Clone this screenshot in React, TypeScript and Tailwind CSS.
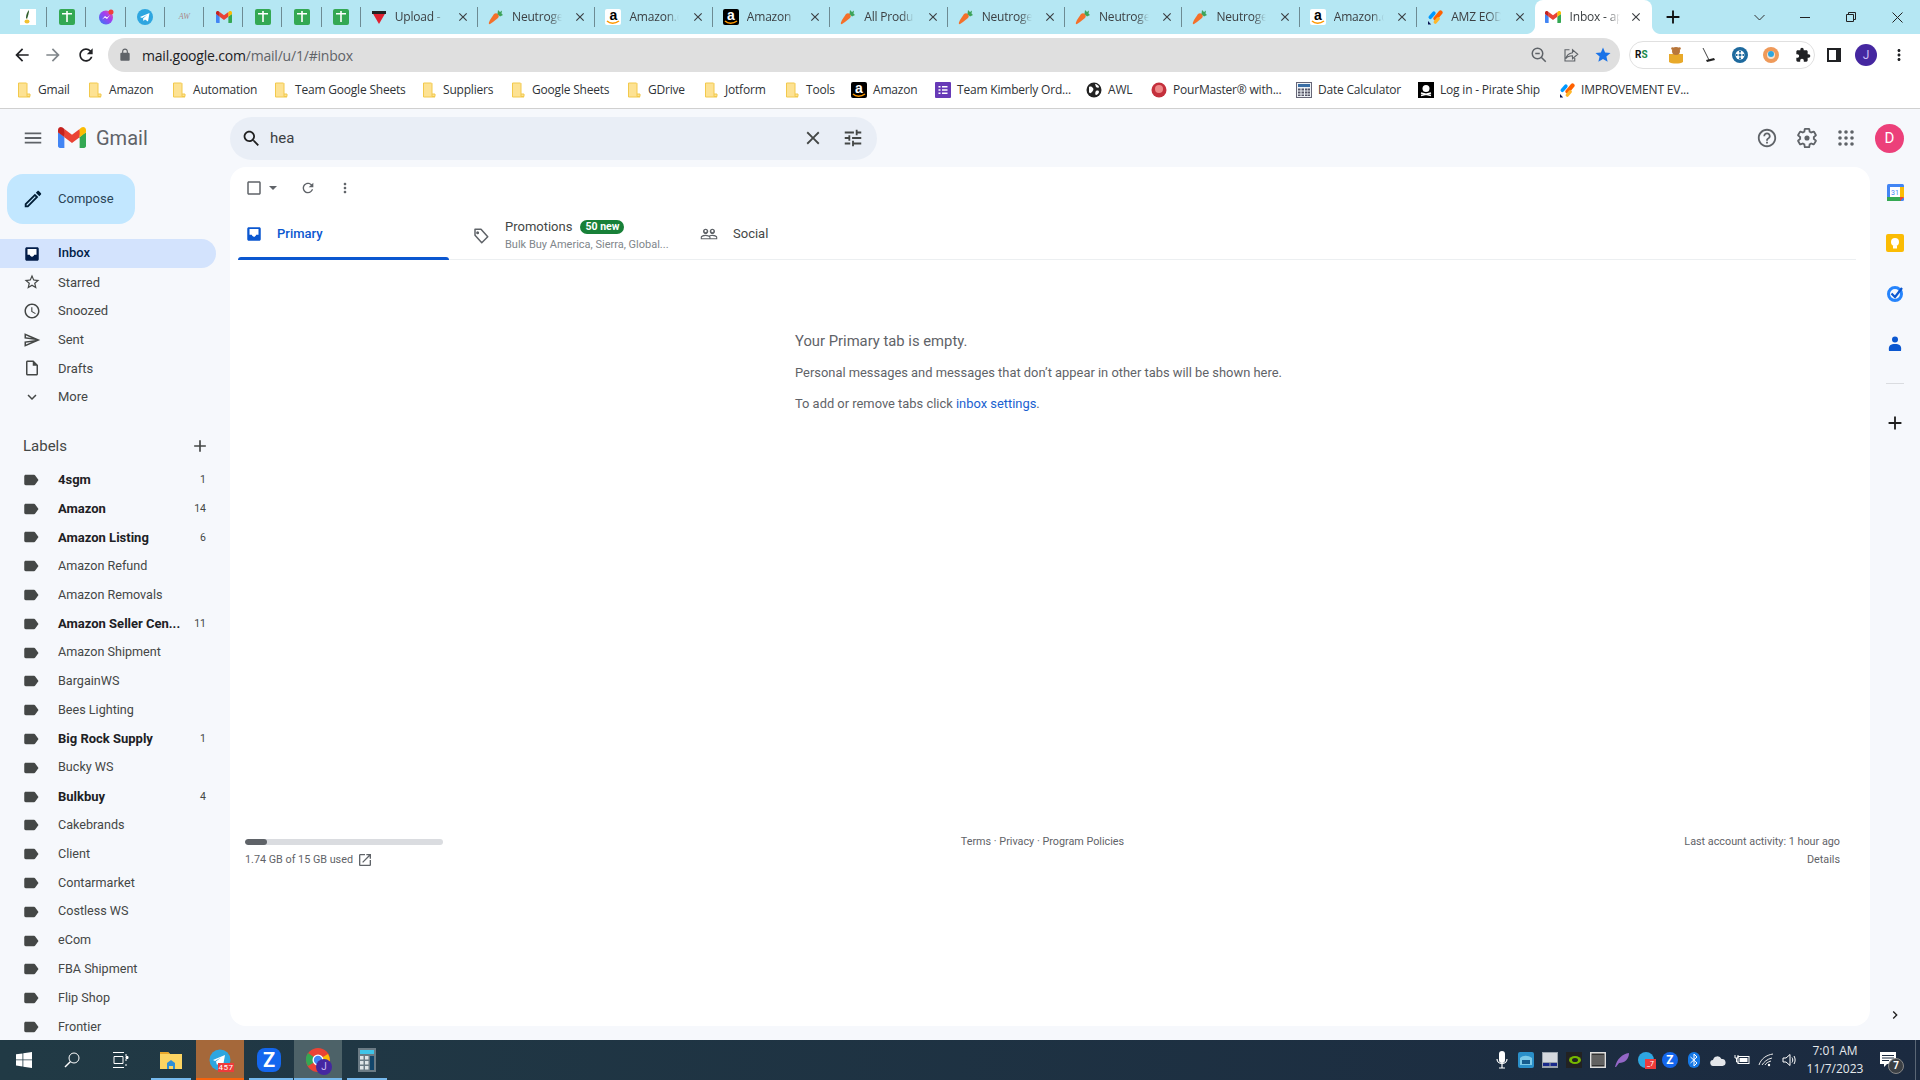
import React from "react";

const P = ({ d, s = 24, c = "#444746", className = "" }: { d: string; s?: number; c?: string; className?: string }) => (
  <svg width={s} height={s} viewBox="0 0 24 24" fill={c} className={"shrink-0 " + className}><path d={d} /></svg>
);

const I = {
  menu: "M3 18h18v-2H3v2zm0-5h18v-2H3v2zm0-7v2h18V6H3z",
  search: "M15.5 14h-.79l-.28-.27C15.41 12.59 16 11.11 16 9.5 16 5.91 13.09 3 9.5 3S3 5.91 3 9.5 5.91 16 9.5 16c1.61 0 3.09-.59 4.23-1.57l.27.28v.79l5 4.99L20.49 19l-4.99-5zm-6 0C7.01 14 5 11.99 5 9.5S7.01 5 9.5 5 14 7.01 14 9.5 11.99 14 9.5 14z",
  close: "M19 6.41L17.59 5 12 10.59 6.41 5 5 6.41 10.59 12 5 17.59 6.41 19 12 13.41 17.59 19 19 17.59 13.41 12z",
  tune: "M3 17v2h6v-2H3zM3 5v2h10V5H3zm10 16v-2h8v-2h-8v-2h-2v6h2zM7 9v2H3v2h4v2h2V9H7zm14 4v-2H11v2h10zm-6-4h2V7h4V5h-4V3h-2v6z",
  refresh: "M17.65 6.35C16.2 4.9 14.21 4 12 4c-4.42 0-7.99 3.58-7.99 8s3.57 8 7.99 8c3.73 0 6.84-2.55 7.73-6h-2.08c-.82 2.33-3.04 4-5.65 4-3.31 0-6-2.69-6-6s2.69-6 6-6c1.66 0 3.14.69 4.22 1.78L13 11h7V4l-2.35 2.35z",
  vert: "M12 8c1.1 0 2-.9 2-2s-.9-2-2-2-2 .9-2 2 .9 2 2 2zm0 2c-1.1 0-2 .9-2 2s.9 2 2 2 2-.9 2-2-.9-2-2-2zm0 6c-1.1 0-2 .9-2 2s.9 2 2 2 2-.9 2-2-.9-2-2-2z",
  star: "M22 9.24l-7.19-.62L12 2 9.19 8.63 2 9.24l5.46 4.73L5.82 21 12 17.27 18.18 21l-1.63-7.03L22 9.24zM12 15.4l-3.76 2.27 1-4.28-3.32-2.88 4.38-.38L12 6.1l1.71 4.04 4.38.38-3.32 2.88 1 4.28L12 15.4z",
  clock: "M11.99 2C6.47 2 2 6.48 2 12s4.47 10 9.99 10C17.52 22 22 17.52 22 12S17.52 2 11.99 2zM12 20c-4.42 0-8-3.58-8-8s3.58-8 8-8 8 3.58 8 8-3.58 8-8 8zm.5-13H11v6l5.25 3.15.75-1.23-4.5-2.67z",
  send: "M4.01 6.03l7.51 3.22-7.52-1 .01-2.22m7.5 8.72L4 17.97v-2.22l7.51-1M2.01 3L2 10l15 2-15 2 .01 7L23 12 2.01 3z",
  file: "M14 2H6c-1.1 0-1.99.9-1.99 2L4 20c0 1.1.89 2 1.99 2H18c1.1 0 2-.9 2-2V8l-6-6zm4 18H6V4h7v5h5v11z",
  label: "M17.63 5.84C17.27 5.33 16.67 5 16 5L5 5.01C3.9 5.01 3 5.9 3 7v10c0 1.1.9 1.99 2 1.99L16 19c.67 0 1.27-.33 1.63-.84L22 12l-4.37-6.16z",
  people: "M16.5 13c-1.2 0-3.07.34-4.5 1-1.43-.67-3.3-1-4.5-1C5.33 13 1 14.08 1 16.25V19h22v-2.75c0-2.17-4.33-3.25-6.5-3.25zm-4 4.5h-10v-1.25c0-.54 2.56-1.75 5-1.75s5 1.21 5 1.75v1.25zm9 0H14v-1.25c0-.46-.2-.86-.52-1.22.88-.3 1.96-.53 3.02-.53 2.44 0 5 1.21 5 1.75v1.25zM7.5 12c1.93 0 3.5-1.57 3.5-3.5S9.43 5 7.5 5 4 6.57 4 8.5 5.57 12 7.5 12zm0-5.5c.83 0 1.5.67 1.5 1.5s-.67 1.5-1.5 1.5S6 8.83 6 8s.67-1.5 1.5-1.5zm9 5.5c1.93 0 3.5-1.57 3.5-3.5S18.43 5 16.5 5 13 6.57 13 8.5s1.57 3.5 3.5 3.5zm0-5.5c.83 0 1.5.67 1.5 1.5s-.67 1.5-1.5 1.5S15 8.83 15 8s.67-1.5 1.5-1.5z",
  help: "M11 18h2v-2h-2v2zm1-16C6.48 2 2 6.48 2 12s4.48 10 10 10 10-4.48 10-10S17.52 2 12 2zm0 18c-4.41 0-8-3.59-8-8s3.59-8 8-8 8 3.59 8 8-3.59 8-8 8zm0-14c-2.21 0-4 1.79-4 4h2c0-1.1.9-2 2-2s2 .9 2 2c0 2-3 1.75-3 5h2c0-2.25 3-2.5 3-5 0-2.21-1.79-4-4-4z",
  gear: "M19.43 12.98c.04-.32.07-.64.07-.98 0-.34-.03-.66-.07-.98l2.11-1.65c.19-.15.24-.42.12-.64l-2-3.46c-.09-.16-.26-.25-.44-.25-.06 0-.12.01-.17.03l-2.49 1c-.52-.4-1.08-.73-1.69-.98l-.38-2.65C14.46 2.18 14.25 2 14 2h-4c-.25 0-.46.18-.49.42l-.38 2.65c-.61.25-1.17.59-1.69.98l-2.49-1c-.06-.02-.12-.03-.18-.03-.17 0-.34.09-.43.25l-2 3.46c-.13.22-.07.49.12.64l2.11 1.65c-.04.32-.07.65-.07.98 0 .33.03.66.07.98l-2.11 1.65c-.19.15-.24.42-.12.64l2 3.46c.09.16.26.25.44.25.06 0 .12-.01.17-.03l2.49-1c.52.4 1.08.73 1.69.98l.38 2.65c.03.24.24.42.49.42h4c.25 0 .46-.18.49-.42l.38-2.65c.61-.25 1.17-.59 1.69-.98l2.49 1c.06.02.12.03.18.03.17 0 .34-.09.43-.25l2-3.46c.12-.22.07-.49-.12-.64l-2.11-1.65z",
  edit: "M3 17.25V21h3.75L17.81 9.94l-3.75-3.75L3 17.25zM5.92 19H5v-.92l9.06-9.06.92.92L5.92 19zM20.71 5.63l-2.34-2.34c-.2-.2-.45-.29-.71-.29s-.51.1-.7.29l-1.83 1.83 3.75 3.75 1.83-1.83c.39-.39.39-1.02 0-1.41z",
  open: "M19 19H5V5h7V3H5c-1.11 0-2 .9-2 2v14c0 1.1.89 2 2 2h14c1.1 0 2-.9 2-2v-7h-2v7zM14 3v2h3.59l-9.83 9.83 1.41 1.41L19 6.41V10h2V3h-7z",
  more: "M16.59 8.59L12 13.17 7.41 8.59 6 10l6 6 6-6z",
  right: "M8.59 16.59L13.17 12 8.59 7.41 10 6l6 6-6 6z",
  plus: "M19 13h-6v6h-2v-6H5v-2h6V5h2v6h6v2z",
  back: "M20 11H7.83l5.59-5.59L12 4l-8 8 8 8 1.41-1.41L7.83 13H20v-2z",
  fwd: "M4 11h12.17l-5.59-5.59L12 4l8 8-8 8-1.41-1.41L16.17 13H4v-2z",
  lock: "M18 8h-1V6c0-2.76-2.24-5-5-5S7 3.24 7 6v2H6c-1.1 0-2 .9-2 2v10c0 1.1.9 2 2 2h12c1.1 0 2-.9 2-2V10c0-1.1-.9-2-2-2zM9 6c0-1.66 1.34-3 3-3s3 1.34 3 3v2H9V6z",
  starFill: "M12 17.27L18.18 21l-1.64-7.03L22 9.24l-7.19-.61L12 2 9.19 8.63 2 9.24l5.46 4.73L5.82 21z",
  puzzle: "M20.5 11H19V7c0-1.1-.9-2-2-2h-4V3.5a2.5 2.5 0 0 0-5 0V5H4c-1.1 0-1.99.9-1.99 2v3.8H3.5c1.49 0 2.7 1.21 2.7 2.7s-1.21 2.7-2.7 2.7H2V20c0 1.1.9 2 2 2h3.8v-1.5c0-1.49 1.21-2.7 2.7-2.7s2.7 1.21 2.7 2.7V22H17c1.1 0 2-.9 2-2v-4h1.5a2.5 2.5 0 0 0 0-5z",
};

const GmailM = ({ w = 16 }: { w?: number }) => (
  <svg width={w} viewBox="0 0 256 193" className="shrink-0">
    <path fill="#4285F4" d="M58.182 192.05V93.14L27.507 65.077 0 49.504v125.091c0 9.658 7.825 17.455 17.455 17.455h40.727z" />
    <path fill="#34A853" d="M197.818 192.05h40.727c9.658 0 17.455-7.826 17.455-17.455V49.505l-31.156 17.837-27.026 25.798v98.91z" />
    <path fill="#EA4335" d="m58.182 93.14-4.174-38.647 4.174-36.989L128 69.868l69.818-52.364 4.669 34.992-4.669 40.644L128 145.504z" />
    <path fill="#FBBC04" d="M197.818 17.504V93.14L256 49.504V26.231c0-21.585-24.64-33.89-41.89-20.945l-16.292 12.218z" />
    <path fill="#C5221F" d="M0 49.504l26.759 20.07L58.182 93.14V17.504L41.89 5.286C24.61-7.66 0 4.646 0 26.23v23.273z" />
  </svg>
);

const Sheets = () => (
  <svg width="16" height="16" viewBox="0 0 16 16"><rect width="16" height="16" rx="2" fill="#34a853" /><path d="M3 4h10v1.500H8.800V13H7.200V5.500H3zM7.200 2h1.600v2H7.200z" fill="#fff" /></svg>
);
const Carrot = () => (
  <svg width="16" height="16" viewBox="0 0 16 16"><path d="M1 15c-.5-.5 0-2 1-4l4-6c1-1 3-1 4 0s1 3 0 4l-5 4c-2 1.500-3.500 2.500-4 2z" fill="#f4702a" /><path d="M9.500 5 10 1l2 2 2-1.500-.5 3L15 6l-3 1.500z" fill="#3da35a" /></svg>
);
const AmazonIcon = ({ dark = false }: { dark?: boolean }) => (
  <span className={"relative w-4 h-4 shrink-0 flex justify-center leading-[12px] text-[14px] font-bold rounded-[2px] overflow-hidden font-['Liberation_Sans',sans-serif] " + (dark ? "bg-black text-white" : "bg-white text-black")}>
    a
    <svg width="14" height="5" viewBox="0 0 14 5" className="absolute left-[1px] bottom-0"><path d="M1 1c3 3 8 3 12 0" stroke="#f90" strokeWidth="1.500" fill="none" /></svg>
  </span>
);
const Jot = () => (
  <svg width="16" height="16" viewBox="0 0 16 16">
    <path d="M7 8l5-6a2 2 0 0 1 3 3l-5 6a2 2 0 0 1-3-3z" fill="#ff6100" />
    <path d="M2 7l3.500-4a1.800 1.800 0 0 1 2.700 2.400L4.600 9.500A1.800 1.800 0 0 1 2 7z" fill="#0099ff" />
    <path d="M7 12l3-3.500a1.700 1.700 0 0 1 2.500 2.300l-3 3.500A1.700 1.700 0 0 1 7 12z" fill="#ffb629" />
    <path d="M1 12v3.500h3.200z" fill="#0a1551" />
  </svg>
);
const Folder = () => (
  <svg width="16" height="16" viewBox="0 0 16 16" className="shrink-0"><path d="M2.500 1h8l.5.5V12l3 3H2.500z" fill="#fde293" stroke="#f2c94c" strokeWidth="1" /><path d="M11 12h3v2.500h-3z" fill="#fde293" stroke="#f2c94c" /></svg>
);

const pinned: React.ReactNode[] = [
  <svg key="0" width="16" height="16" viewBox="0 0 16 16"><rect width="16" height="16" fill="#fff" /><path d="M9 1c-2 2-3 5-3 8l1 1c1-3 2-6 2-9z" fill="#2f5d2a" /><ellipse cx="7" cy="12.500" rx="2.500" ry="2" fill="#f2c230" /></svg>,
  <Sheets key="1" />,
  <svg key="2" width="16" height="16" viewBox="0 0 16 16"><defs><linearGradient id="ms" x1="0" y1="1" x2="1" y2="0"><stop offset="0" stopColor="#2f7cf6" /><stop offset=".6" stopColor="#a33df0" /><stop offset="1" stopColor="#ff5c87" /></linearGradient></defs><circle cx="8" cy="8.500" r="7" fill="url(#ms)" /><path d="M4 10.500 7 7l2 1.500L12 6l-3 4-2-1.500z" fill="#fff" /><circle cx="13" cy="3" r="2.500" fill="#f0413a" /></svg>,
  <svg key="3" width="16" height="16" viewBox="0 0 16 16"><circle cx="8" cy="8" r="8" fill="#2ea6e0" /><path d="M3 8l9.500-4-1.500 8.500-3-2-1.500 1.500-.5-2.500 4-3.500-5 3z" fill="#fff" /></svg>,
  <span key="4" className="w-4 h-4 text-[8px] italic text-[#a88] leading-4 text-center font-['Liberation_Serif',serif]">AW</span>,
  <GmailM key="5" />,
  <Sheets key="6" />,
  <Sheets key="7" />,
  <Sheets key="8" />,
];

const tabs: { t: string; i: React.ReactNode }[] = [
  { t: "Upload -", i: <svg width="16" height="16" viewBox="0 0 16 16"><path d="M1 3h14L8 15z" fill="#e02030" /><path d="M1 2h14v3H1z" fill="#222" /></svg> },
  { t: "Neutrogena", i: <Carrot /> },
  { t: "Amazon.com", i: <AmazonIcon /> },
  { t: "Amazon", i: <AmazonIcon dark /> },
  { t: "All Products", i: <Carrot /> },
  { t: "Neutrogena", i: <Carrot /> },
  { t: "Neutrogena", i: <Carrot /> },
  { t: "Neutrogena", i: <Carrot /> },
  { t: "Amazon.com", i: <AmazonIcon /> },
  { t: "AMZ EOD", i: <Jot /> },
];

const bookmarks: { t: string; w: string; i: React.ReactNode }[] = [
  { t: "Gmail", w: "w-[71px]", i: <Folder /> },
  { t: "Amazon", w: "w-[84px]", i: <Folder /> },
  { t: "Automation", w: "w-[102px]", i: <Folder /> },
  { t: "Team Google Sheets", w: "w-[148px]", i: <Folder /> },
  { t: "Suppliers", w: "w-[89px]", i: <Folder /> },
  { t: "Google Sheets", w: "w-[116px]", i: <Folder /> },
  { t: "GDrive", w: "w-[77px]", i: <Folder /> },
  { t: "Jotform", w: "w-[81px]", i: <Folder /> },
  { t: "Tools", w: "w-[67px]", i: <Folder /> },
  { t: "Amazon", w: "w-[84px]", i: <AmazonIcon dark /> },
  { t: "Team Kimberly Ord...", w: "w-[151px]", i: <svg width="16" height="16" viewBox="0 0 16 16"><rect width="16" height="16" rx="1" fill="#673ab7" /><path d="M3.500 4h2v1.500h-2zM7 4h5.500v1.500H7zM3.500 7.200h2v1.500h-2zM7 7.200h5.500v1.500H7zM3.500 10.500h2V12h-2zM7 10.500h5.500V12H7z" fill="#fff" /></svg> },
  { t: "AWL", w: "w-[65px]", i: <svg width="16" height="16" viewBox="0 0 16 16"><circle cx="8" cy="8" r="7.500" fill="#222" /><path d="M3 5c2-1 3 0 4 1s0 3-1 4-2 2-3 0zM9 2c2 0 4 2 4 3s-2 1-3 0zM10 9c2-1 3 0 3 1s-2 3-3 3-1-3 0-4z" fill="#fff" /></svg> },
  { t: "PourMaster® with...", w: "w-[145px]", i: <svg width="16" height="16" viewBox="0 0 16 16"><circle cx="8" cy="8" r="7.500" fill="#c4303c" /><circle cx="8" cy="7" r="4" fill="#e88" /></svg> },
  { t: "Date Calculator", w: "w-[122px]", i: <svg width="16" height="16" viewBox="0 0 16 16"><rect x=".5" y=".5" width="15" height="15" fill="#eef2f6" stroke="#667" /><rect x="2" y="2" width="12" height="3" fill="#3a6ea5" /><path d="M2 6.500h2.500v2H2zM5.500 6.500H8v2H5.500zM9 6.500h2.500v2H9zM12 6.500h2v2h-2zM2 9.500h2.500v2H2zM5.500 9.500H8v2H5.500zM9 9.500h2.500v2H9zM12 9.500h2v2h-2zM2 12.500h2.500v1.500H2zM5.500 12.500H8v1.500H5.500zM9 12.500h2.500v1.500H9zM12 12.500h2v1.500h-2z" fill="#556" /></svg> },
  { t: "Log in - Pirate Ship", w: "w-[141px]", i: <svg width="16" height="16" viewBox="0 0 16 16"><rect width="16" height="16" fill="#000" /><circle cx="8" cy="6.500" r="3.500" fill="#fff" /><path d="M3 11l10 2.500M13 11 3 13.500" stroke="#fff" strokeWidth="1.500" /></svg> },
  { t: "IMPROVEMENT EV...", w: "w-[170px]", i: <Jot /> },
];

const nav: { t: string; d: string }[] = [
  { t: "Starred", d: I.star },
  { t: "Snoozed", d: I.clock },
  { t: "Sent", d: I.send },
  { t: "Drafts", d: I.file },
  { t: "More", d: I.more },
];

const labels: { t: string; n?: string; b?: boolean }[] = [
  { t: "4sgm", n: "1", b: true },
  { t: "Amazon", n: "14", b: true },
  { t: "Amazon Listing", n: "6", b: true },
  { t: "Amazon Refund" },
  { t: "Amazon Removals" },
  { t: "Amazon Seller Cen...", n: "11", b: true },
  { t: "Amazon Shipment" },
  { t: "BargainWS" },
  { t: "Bees Lighting" },
  { t: "Big Rock Supply", n: "1", b: true },
  { t: "Bucky WS" },
  { t: "Bulkbuy", n: "4", b: true },
  { t: "Cakebrands" },
  { t: "Client" },
  { t: "Contarmarket" },
  { t: "Costless WS" },
  { t: "eCom" },
  { t: "FBA Shipment" },
  { t: "Flip Shop" },
  { t: "Frontier" },
];

const InboxIcon = ({ c, s = 18 }: { c: string; s?: number }) => (
  <svg width={s} height={s} viewBox="0 0 24 24" className="shrink-0">
    <path d="M19 3H5c-1.100 0-2 .9-2 2v14c0 1.100.9 2 2 2h14c1.100 0 2-.9 2-2V5c0-1.100-.9-2-2-2z" fill={c} />
    <path d="M6 13h3c.4 1.500 1.500 2.500 3 2.500s2.600-1 3-2.500h3V5.300H6z" fill="#fff" />
  </svg>
);

function Tray() {
  const items: React.ReactNode[] = [
    <svg width="16" height="20" viewBox="0 0 16 20"><rect x="5" y="1" width="6" height="12" rx="3" fill="#fff" /><path d="M3 9c0 6 10 6 10 0M8 14v4M5 18h6" stroke="#fff" strokeWidth="1.200" fill="none" /></svg>,
    <svg width="16" height="16" viewBox="0 0 16 16"><rect width="16" height="16" rx="2" fill="#2a8fc9" /><path d="M2 6c3-3 8-3 12 0v7H2z" fill="#7cc9e8" /><path d="M4 8h8v4H4z" fill="#165c8e" /></svg>,
    <svg width="16" height="16" viewBox="0 0 16 16"><rect width="16" height="16" fill="#9aa3ad" /><rect x="1" y="1" width="14" height="9" fill="#d5d9de" /><path d="M1 11h6.500v3H1zM8.500 11H15v3H8.500z" fill="#1a2a8c" /></svg>,
    <svg width="16" height="16" viewBox="0 0 16 16"><rect width="16" height="16" fill="#222" /><ellipse cx="9" cy="8" rx="6" ry="4" fill="#76b900" /><ellipse cx="9" cy="8" rx="3" ry="2" fill="#222" /></svg>,
    <svg width="16" height="16" viewBox="0 0 16 16"><rect width="16" height="16" fill="#ddd" /><rect x="1.500" y="1.500" width="13" height="13" fill="#333" /><path d="M2 4h12M2 6h12M2 8h12M2 10h12M2 12h12" stroke="#aaa" strokeWidth=".8" /></svg>,
    <svg width="16" height="16" viewBox="0 0 16 16"><path d="M1 15C3 7 8 2 15 1c0 6-4 10-10 10l-3 4z" fill="#9467c7" /></svg>,
    <span className="relative w-4 h-4"><svg width="16" height="16" viewBox="0 0 16 16"><circle cx="8" cy="8" r="8" fill="#2ea6e0" /></svg><span className="absolute right-[-2px] bottom-[-1px] w-[11px] h-[10px] bg-[#ee3b3b] text-white text-[7px] leading-[10px] text-center font-['Roboto',sans-serif]">_7</span></span>,
    <span className="w-4 h-4 rounded-full bg-[#1467ee] text-white text-[12px] leading-4 font-bold text-center font-['Roboto',sans-serif]">Z</span>,
    <svg width="12" height="16" viewBox="0 0 12 16"><rect width="12" height="16" rx="6" fill="#1478e6" /><path d="M2.500 5l6.500 6-3 3V2l3 3-6.500 6" stroke="#fff" fill="none" strokeWidth="1" /></svg>,
    <svg width="16" height="11" viewBox="0 0 16 11"><path d="M3.500 11a3 3 0 0 1-.5-6 4.500 4.500 0 0 1 8.500-1 3.500 3.500 0 0 1 1 7z" fill="#e4e6ea" /></svg>,
    <svg width="16" height="12" viewBox="0 0 16 12"><rect x="4" y="2.500" width="11" height="7" fill="none" stroke="#fff" /><rect x="5.500" y="4" width="8" height="4" fill="#fff" /><path d="M1 1v3h3V1M2.500 4v4h2" stroke="#fff" fill="none" /></svg>,
    <svg width="16" height="14" viewBox="0 0 16 14"><path d="M1 12C3 6 8 2 15 1M4 12c2-3 5-6 10-7M7 12c1-2 3-3 6-4" stroke="#e8e8e8" fill="none" /><circle cx="11" cy="12" r="1.200" fill="#fff" /></svg>,
    <svg width="16" height="14" viewBox="0 0 16 14"><path d="M1 5h3l4-3.500v11L4 9H1z" fill="none" stroke="#fff" /><path d="M10 4.500c1 1.500 1 3.500 0 5M12 3c1.500 2.500 1.500 5.500 0 8" stroke="#fff" fill="none" /></svg>,
  ];
  return (
    <div className="flex items-center ml-auto h-full">
      {items.map((x, i) => (
        <div key={i} className="w-6 flex items-center justify-center">{x}</div>
      ))}
      <div className="w-[66px] text-center text-[12px] leading-[18px] text-[#e6e9ec] font-['Open_Sans',sans-serif]">
        <div>7:01 AM</div>
        <div>11/7/2023</div>
      </div>
      <div className="relative w-10 flex justify-center">
        <svg width="18" height="18" viewBox="0 0 18 18"><path d="M1 1h16v12H8l-3 3v-3H1z" fill="#fff" /><path d="M3 4.500h12M3 7h12M3 9.500h7" stroke="#1b2a40" /></svg>
        <span className="absolute left-[20px] top-[7px] w-4 h-4 rounded-full bg-[#3b3f44] border border-[#888] text-white text-[10px] leading-[14px] text-center font-bold font-['Roboto',sans-serif]">7</span>
      </div>
      <div className="w-[7px]" />
      <div className="w-px h-full bg-[#5a6675]" />
      <div className="w-1" />
    </div>
  );
}

export default function App() {
  return (
    <div className="h-screen w-full overflow-hidden flex flex-col bg-white font-['Roboto',sans-serif]">
      {/* Tab strip */}
      <div className="h-[34px] shrink-0 bg-[#b5e7f3] flex pl-2 font-['Open_Sans',sans-serif]">
        {pinned.map((p, i) => (
          <div key={i} className="relative w-[39.2px] flex items-center justify-center">
            {p}
            <span className="absolute right-0 top-[7px] h-[20px] w-px bg-[#6d8b93]" />
          </div>
        ))}
        {tabs.map((t, i) => (
          <div key={i} className="relative w-[117.400px] flex items-center pl-[10px] pr-[8px] gap-[8px]">
            <span className="w-4 h-4 shrink-0 flex items-center justify-center">{t.i}</span>
            <span className="w-[50px] overflow-hidden whitespace-nowrap text-[12px] tracking-[-0.2px] text-[#3c4043] [mask-image:linear-gradient(to_right,black_75%,transparent)]">{t.t}</span>
            <P d={I.close} s={14} c="#3c4043" className="ml-auto" />
            {i < 9 && <span className="absolute right-0 top-[7px] h-[20px] w-px bg-[#6d8b93]" />}
          </div>
        ))}
        <div className="relative w-[117px] bg-white rounded-t-lg flex items-center pl-[10px] pr-[9px] gap-[9px]">
          <svg width="8" height="8" viewBox="0 0 8 8" className="absolute left-[-8px] bottom-0"><path d="M8 0v8H0c4 0 8-4 8-8z" fill="#fff" /></svg>
          <svg width="8" height="8" viewBox="0 0 8 8" className="absolute right-[-8px] bottom-0"><path d="M0 0v8H8c-4 0-8-4-8-8z" fill="#fff" /></svg>
          <GmailM />
          <span className="w-[50px] overflow-hidden whitespace-nowrap text-[12px] tracking-[-0.2px] text-[#3c4043] [mask-image:linear-gradient(to_right,black_75%,transparent)]">Inbox - ap</span>
          <P d={I.close} s={14} c="#3c4043" className="ml-auto" />
        </div>
        <div className="w-11 flex items-center justify-center -ml-[1px]"><P d={I.plus} s={22} c="#111" /></div>
        <div className="ml-auto flex">
          <div className="w-[46px] flex items-center justify-center"><svg width="11" height="7" viewBox="0 0 11 7"><path d="M.5 1l5 5 5-5" stroke="#333" fill="none" /></svg></div>
          <div className="w-[46px] flex items-center justify-center"><span className="w-[10px] h-px bg-[#222]" /></div>
          <div className="w-[46px] flex items-center justify-center"><svg width="10" height="10" viewBox="0 0 10 10"><path d="M.5 2.500h7v7h-7zM2.500 2.500v-2h7v7h-2" fill="none" stroke="#222" /></svg></div>
          <div className="w-[46px] flex items-center justify-center"><svg width="11" height="11" viewBox="0 0 11 11"><path d="M.5.500l10 10M10.500.500l-10 10" stroke="#222" /></svg></div>
        </div>
      </div>

      {/* Omnibox row */}
      <div className="h-[42px] shrink-0 flex items-center">
        <div className="w-[108px] shrink-0 flex items-center">
          <P d={I.back} s={20} c="#202124" className="ml-3" />
          <P d={I.fwd} s={20} c="#80868b" className="ml-[11px]" />
          <P d={I.refresh} s={20} c="#202124" className="ml-[13px]" />
        </div>
        <div className="w-[1512px] h-[34px] shrink-0 rounded-full bg-[#dfdfdf] flex items-center pl-[10px] pr-2">
          <P d={I.lock} s={14} c="#5f6368" />
          <span className="ml-[10px] text-[14px] text-[#202124] font-['Open_Sans',sans-serif] tracking-[-0.2px]">mail.google.com<span className="text-[#5f6368]">/mail/u/1/#inbox</span></span>
          <div className="ml-auto flex items-center gap-[14px]">
            <svg width="18" height="18" viewBox="0 0 24 24" fill="none" stroke="#5f6368" strokeWidth="2"><circle cx="10" cy="10" r="7" /><path d="M15 15l6 6M7 10h6" /></svg>
            <svg width="18" height="18" viewBox="0 0 24 24" fill="none" stroke="#5f6368" strokeWidth="1.500"><path d="M14 5v4C8 10 6 13 5 17c2-3 5-4 9-4v4l7-6zM10 5H4v15h13v-4" /></svg>
            <P d={I.starFill} s={18} c="#1a73e8" />
          </div>
        </div>
        <div className="ml-[9px] w-[186px] h-[28px] border border-[#e0e0e0] rounded-full flex items-center justify-between pl-[5px] pr-[3px]">
          <span className="w-4 h-4 text-[10px] font-bold leading-4 text-[#111]">R<span className="text-[#1a8a4a]">S</span></span>
          <svg width="18" height="18" viewBox="0 0 18 18"><path d="M2 8h14v8c-3 2-11 2-14 0z" fill="#e8a92a" /><circle cx="9" cy="5" r="4" fill="#b8763a" /><circle cx="5.500" cy="2.500" r="1.300" fill="#b8763a" /><circle cx="12.500" cy="2.500" r="1.300" fill="#b8763a" /></svg>
          <svg width="16" height="16" viewBox="0 0 16 16"><path d="M3 1l6 12" stroke="#444" /><path d="M7 15l8-2-1-2-8 2z" fill="#222" /></svg>
          <svg width="16" height="16" viewBox="0 0 16 16"><circle cx="8" cy="8" r="8" fill="#1e6a9e" /><circle cx="8" cy="8" r="4.500" fill="#fff" /><circle cx="8" cy="8" r="1.500" fill="#1e6a9e" /><path d="M8 4v1.500M8 10.500V12M4 8h1.500M10.500 8H12" stroke="#1e6a9e" strokeWidth="2" /></svg>
          <svg width="16" height="16" viewBox="0 0 16 16"><circle cx="8" cy="8" r="8" fill="#ef9a5a" /><circle cx="8" cy="8" r="4" fill="#f6e2d0" /><circle cx="8" cy="7" r="3" fill="#2ea6e0" /></svg>
          <P d={I.puzzle} s={16} c="#202124" />
        </div>
        <svg width="16" height="16" viewBox="0 0 16 16" className="ml-[11px]"><rect x="1" y="1" width="14" height="14" fill="#202124" /><rect x="3" y="3" width="7" height="10" fill="#fff" /></svg>
        <span className="ml-[13px] w-[22px] h-[22px] rounded-full bg-[#4527a0] text-[#cdbdf5] text-[12px] leading-[22px] text-center">J</span>
        <P d={I.vert} s={18} c="#202124" className="ml-[13px]" />
      </div>

      {/* Bookmarks */}
      <div className="h-[33px] shrink-0 flex items-center pl-4 pb-[4px] border-b border-[#d0d0d0] font-['Open_Sans',sans-serif]">
        {bookmarks.map((b, i) => (
          <div key={i} className={"flex items-center gap-[6px] shrink-0 " + b.w}>
            <span className="w-4 h-4 shrink-0 flex items-center justify-center">{b.i}</span>
            <span className="text-[12px] text-[#2f3337] whitespace-nowrap tracking-[-0.2px]">{b.t}</span>
          </div>
        ))}
      </div>

      {/* Gmail */}
      <div className="flex-1 min-h-0 bg-[#f6f8fc] flex flex-col">
        <div className="h-[58px] shrink-0 flex items-center">
          <div className="w-[230px] shrink-0 flex items-center">
            <P d={I.menu} s={22} c="#5f6368" className="ml-[22px]" />
            <span className="ml-[14px]"><GmailM w={28} /></span>
            <span className="ml-[10px] text-[20px] text-[#5f6368] leading-none">Gmail</span>
          </div>
          <div className="w-[647px] h-[43px] rounded-full bg-[#e9eef6] flex items-center pl-[11px] pr-[13px]">
            <P d={I.search} s={21} c="#1f1f1f" />
            <span className="ml-[8px] text-[15px] text-[#3c4043]">hea</span>
            <P d={I.close} s={22} c="#444746" className="ml-auto" />
            <P d={I.tune} s={22} c="#444746" className="ml-[18px]" />
          </div>
          <div className="ml-auto flex items-center pr-[16px]">
            <div className="w-10 flex justify-center"><P d={I.help} s={22} c="#5f6368" /></div>
            <div className="w-10 flex justify-center">
              <svg width="22" height="22" viewBox="0 0 24 24"><path d={I.gear} fill="none" stroke="#5f6368" strokeWidth="2" /><circle cx="12" cy="12" r="2.800" fill="#5f6368" /></svg>
            </div>
            <div className="w-10 flex justify-center -ml-[1px]">
              <svg width="16" height="16" viewBox="0 0 16 16" fill="#5f6368">
                {[2, 8, 14].flatMap((y) => [2, 8, 14].map((x) => <circle key={x + "-" + y} cx={x} cy={y} r="1.800" />))}
              </svg>
            </div>
            <span className="ml-[9px] w-[29px] h-[29px] rounded-full bg-[#ec407a] text-white text-[15px] leading-[29px] text-center">D</span>
          </div>
        </div>

        <div className="flex-1 min-h-0 flex">
          {/* Sidebar */}
          <div className="w-[230px] shrink-0 overflow-hidden pt-[7px]">
            <div className="ml-[7px] w-[128px] h-[50px] rounded-2xl bg-[#c2e7ff] flex items-center pl-[15px]">
              <P d={I.edit} s={22} c="#001d35" />
              <span className="ml-[14px] text-[13px] text-[#2b4557]">Compose</span>
            </div>
            <div className="mt-[15px] w-[216px] h-[29px] rounded-r-full bg-[#d3e3fd] flex items-center pl-[23px]">
              <InboxIcon c="#041e49" s={18} />
              <span className="ml-[17px] text-[13px] font-medium text-[#041e49] -translate-y-px">Inbox</span>
            </div>
            {nav.map((n) => (
              <div key={n.t} className="h-[28.700px] flex items-center pl-[23px]">
                <P d={n.d} s={18} c="#444746" />
                <span className="ml-[17px] text-[13px] text-[#444746]">{n.t}</span>
              </div>
            ))}
            <div className="mt-[21px] h-[28px] flex items-center pl-[23px] pr-[20px] justify-between">
              <span className="text-[15px] text-[#444746]">Labels</span>
              <P d={I.plus} s={20} c="#444746" />
            </div>
            <div className="mt-[5px]">
              {labels.map((l, i) => (
                <div key={i} className="h-[28.800px] flex items-center pl-[23px] pr-[24px]">
                  <P d={I.label} s={18} c="#444746" className="-ml-[1px]" />
                  <span className={"ml-[18px] whitespace-nowrap " + (l.b ? "text-[13px] font-bold text-[#202124]" : "text-[12.600px] text-[#444746]")}>{l.t}</span>
                  {l.n && <span className="ml-auto text-[10.500px] text-[#444746]">{l.n}</span>}
                </div>
              ))}
            </div>
          </div>

          {/* Card */}
          <div className="w-[1640px] shrink-0 mb-[14px] bg-white rounded-2xl flex flex-col overflow-hidden">
            <div className="h-[45px] shrink-0 flex items-center pb-[4px]">
              <svg width="18" height="18" viewBox="0 0 24 24" className="ml-[15px]" fill="#5f6368"><path d="M19 5v14H5V5h14m0-2H5c-1.100 0-2 .9-2 2v14c0 1.100.9 2 2 2h14c1.100 0 2-.9 2-2V5c0-1.100-.9-2-2-2z" /></svg>
              <svg width="8" height="4" viewBox="0 0 8 4" className="ml-[6px]"><path d="M0 0h8L4 4z" fill="#5f6368" /></svg>
              <P d={I.refresh} s={16} c="#5f6368" className="ml-[23px]" />
              <P d={I.vert} s={16} c="#5f6368" className="ml-[21px]" />
            </div>
            <div className="h-[48px] shrink-0 flex ml-2 mr-[14px] border-b border-[#eceff1]">
              <div className="relative w-[211px] h-full flex items-center pl-[7px] pb-[3px]">
                <InboxIcon c="#0b57d0" s={18} />
                <span className="ml-[14px] text-[13px] font-medium text-[#0b57d0]">Primary</span>
                <span className="absolute left-0 right-0 -bottom-px h-[3px] bg-[#0b57d0] rounded-t-sm" />
              </div>
              <div className="w-[230px] h-full flex items-center pl-[23px]">
                <svg width="18" height="18" viewBox="0 0 24 24" fill="none" stroke="#5f6368" strokeWidth="2"><path d="M12 3H4v8l9 10 8-8z" strokeLinejoin="round" /><circle cx="7.500" cy="7.500" r="1" fill="#5f6368" /></svg>
                <div className="ml-[15px]">
                  <div className="flex items-center">
                    <span className="text-[13px] leading-[16px] text-[#444746]">Promotions</span>
                    <span className="ml-[8px] h-[14px] w-[44px] rounded-full bg-[#188038] text-white text-[10.500px] leading-[14px] font-bold text-center">50 new</span>
                  </div>
                  <div className="mt-[2px] text-[11px] leading-[16px] text-[#80868b] whitespace-nowrap">Bulk Buy America, Sierra, Global...</div>
                </div>
              </div>
              <div className="h-full flex items-center pl-[21px] pb-[3px]">
                <P d={I.people} s={18} c="#5f6368" />
                <span className="ml-[15px] text-[13px] text-[#444746]">Social</span>
              </div>
            </div>
            <div className="flex-1 min-h-0 pl-[565px] pt-[71px]">
              <div className="text-[14.800px] leading-5 text-[#5f6368]">Your Primary tab is empty.</div>
              <div className="mt-[12px] text-[12.900px] leading-5 text-[#5f6368]">Personal messages and messages that don’t appear in other tabs will be shown here.</div>
              <div className="mt-[11px] text-[12.900px] leading-5 text-[#5f6368]">To add or remove tabs click <span className="text-[#1a5fd0]">inbox settings</span>.</div>
            </div>
            <div className="h-[188px] shrink-0 pl-[15px] pr-[30px] grid grid-cols-3 text-[10.800px] text-[#5f6368]">
              <div>
                <div className="w-[198px] h-[6px] rounded-full bg-[#dadce0] overflow-hidden mt-[1px]"><div className="w-[22px] h-full rounded-full bg-[#5f6368]" /></div>
                <div className="mt-[6px] flex items-center">
                  <span className="leading-[18px]">1.74 GB of 15 GB used</span>
                  <P d={I.open} s={16} c="#5f6368" className="ml-[4px]" />
                </div>
              </div>
              <div className="text-center leading-[18px] -mt-[5px]">Terms · Privacy · Program Policies</div>
              <div className="text-right leading-[18px] -mt-[5px]">
                <div>Last account activity: 1 hour ago</div>
                <div>Details</div>
              </div>
            </div>
          </div>

          {/* Right rail */}
          <div className="flex-1 flex flex-col items-center">
            <div className="h-[50.500px] flex items-center">
              <svg width="17" height="17" viewBox="0 0 17 17"><rect width="17" height="17" rx="1.500" fill="#4285f4" /><rect x="13" y="3" width="4" height="11" fill="#fbbc04" /><rect y="13" width="14" height="4" fill="#34a853" /><rect x="3" y="3" width="10" height="10" fill="#fff" /><text x="8" y="11" fontSize="7" textAnchor="middle" fill="#4285f4" fontFamily="Roboto">31</text><path d="M13 17l4-4h-4z" fill="#ea4335" /></svg>
            </div>
            <div className="h-[50.500px] flex items-center">
              <svg width="18" height="18" viewBox="0 0 18 18"><rect width="18" height="18" rx="2" fill="#fbbc04" /><circle cx="9" cy="8" r="4" fill="#fff" /><rect x="7" y="11.500" width="4" height="3" fill="#fff" /></svg>
            </div>
            <div className="h-[50.500px] flex items-center">
              <svg width="18" height="18" viewBox="0 0 18 18"><circle cx="9" cy="10" r="6.500" fill="none" stroke="#2684fc" strokeWidth="3" /><path d="M5.500 9.500 9 13l7-9" stroke="#0b57d0" strokeWidth="2.200" fill="none" /></svg>
            </div>
            <div className="h-[50.500px] flex items-center">
              <svg width="14" height="16" viewBox="0 0 14 16"><circle cx="7" cy="3.500" r="3" fill="#0b57d0" /><path d="M1 15c-1-6 2-7 6-7s7 1 6 7z" fill="#0b57d0" /></svg>
            </div>
            <div className="mt-[14px] w-[18px] h-px bg-[#dadce0]" />
            <div className="mt-[28px]"><P d={I.plus} s={22} c="#1f1f1f" /></div>
            <div className="mt-auto mb-[17px]"><P d={I.right} s={16} c="#1f1f1f" /></div>
          </div>
        </div>
      </div>

      {/* Taskbar */}
      <div className="h-[40px] shrink-0 flex bg-gradient-to-r from-[#213a45] to-[#1b2a40]">
        <div className="w-12 flex items-center justify-center">
          <svg width="16" height="16" viewBox="0 0 16 16" fill="#fff"><path d="M0 2.300 6.500 1.400v6H0zM7.300 1.300 16 0v7.400H7.300zM0 8.200h6.500v6.300L0 13.600zM7.300 8.200H16V16l-8.700-1.300z" /></svg>
        </div>
        <div className="w-12 flex items-center justify-center">
          <svg width="16" height="16" viewBox="0 0 16 16" fill="none" stroke="#fff"><circle cx="10" cy="6" r="5" /><path d="M6.500 9.500 1 15" strokeWidth="1.500" /></svg>
        </div>
        <div className="w-12 flex items-center justify-center">
          <svg width="18" height="16" viewBox="0 0 18 16" fill="none" stroke="#fff"><path d="M2 .5h11M2 15.500h11M3 4.500h9v7H3zM15 2v2M15 7v2M15 12v2" /><path d="M15 6.500h2v-2h-2z" fill="#fff" /></svg>
        </div>
        <div className="relative w-12 ml-[3px] flex items-center justify-center">
          <svg width="22" height="20" viewBox="0 0 22 20"><path d="M0 2h8l2 2h12v15H0z" fill="#fcd462" /><path d="M0 2h8l2 2H0z" fill="#e8a72b" /><path d="M7 19v-6l4-3 4 3v6z" fill="#2f8ed6" /><path d="M9 19v-3h4v3z" fill="#fcd462" /></svg>
          <span className="absolute left-1 right-1 bottom-0 h-[2px] bg-[#76b9ed]" />
        </div>
        <div className="relative w-12 ml-px bg-[#a5683a] flex items-center justify-center">
          <svg width="22" height="22" viewBox="0 0 22 22"><circle cx="11" cy="11" r="10.500" fill="#2ea6e0" /><path d="M4 11l12-5-2 11-4-3-2 2-1-3.500 5-4-6 3.500z" fill="#fff" /></svg>
          <span className="absolute left-[22px] top-[23px] w-4 h-[9px] bg-[#ee3b3b] text-white text-[8px] leading-[9px] text-center tracking-[0.5px]">457</span>
          <span className="absolute left-0 right-0 bottom-0 h-[2px] bg-[#f7630c]" />
        </div>
        <div className="relative w-12 ml-px flex items-center justify-center">
          <span className="w-6 h-6 rounded-lg bg-[#1467ee] text-white text-[20px] leading-6 font-bold text-center">Z</span>
          <span className="absolute left-1 right-0 bottom-0 h-[2px] bg-[#76b9ed]" />
        </div>
        <div className="relative w-12 ml-px bg-[#4d6268] flex items-center justify-center">
          <svg width="24" height="24" viewBox="0 0 24 24"><circle cx="12" cy="12" r="12" fill="#ea4335" /><path d="M12 12 2 18A12 12 0 0 1 2 5z" fill="#34a853" /><path d="M12 12l10-6a12 12 0 0 1-8 18z" fill="#fbbc04" /><circle cx="12" cy="12" r="5.500" fill="#fff" /><circle cx="12" cy="12" r="4.200" fill="#4285f4" /></svg>
          <span className="absolute left-[22px] top-[19px] w-4 h-4 rounded-full bg-[#4527a0] text-[#cdbdf5] text-[10px] leading-4 text-center">J</span>
          <span className="absolute left-0 right-0 bottom-0 h-[2px] bg-[#76b9ed]" />
        </div>
        <div className="relative w-12 ml-px flex items-center justify-center">
          <svg width="18" height="24" viewBox="0 0 18 24"><rect width="18" height="24" fill="#6b7b85" /><rect x="2" y="2" width="14" height="4" fill="#3fc4e8" /><path d="M2 8h3.500v3.500H2zM7 8h3.500v3.500H7zM2 13h3.500v3.500H2zM7 13h3.500v3.500H7zM2 18h3.500v3.500H2zM7 18h3.500v3.500H7z" fill="#dfe5e8" /><rect x="12" y="8" width="4" height="14" fill="#12466b" /></svg>
          <span className="absolute left-1 right-1 bottom-0 h-[2px] bg-[#76b9ed]" />
        </div>
        <Tray />
      </div>
    </div>
  );
}
